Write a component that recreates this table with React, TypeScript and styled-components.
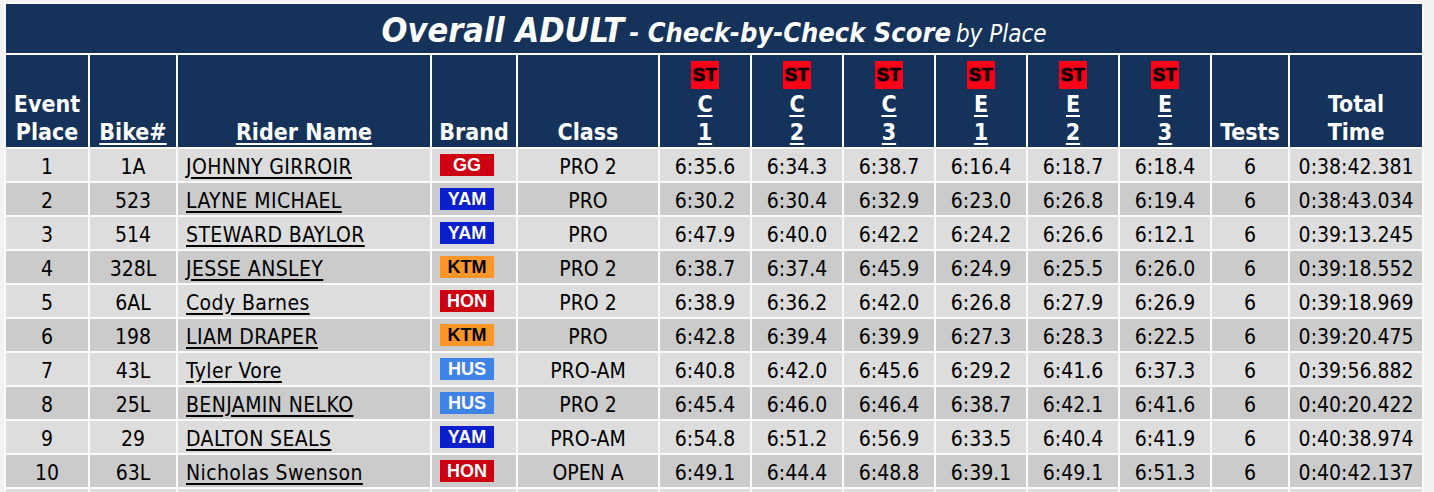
import React from 'react';
import styled, { createGlobalStyle } from 'styled-components';

const GlobalStyle = createGlobalStyle`
  * { box-sizing: border-box; }
  body {
    margin: 0;
    background: #f2f2f2;
    font-family: "DejaVu Sans Condensed", "DejaVu Sans", Verdana, sans-serif;
  }
`;

const Page = styled.div`
  padding: 2px 0 0 4px;
`;

const Table = styled.table`
  width: 1420px;
  table-layout: fixed;
  border-collapse: separate;
  border-spacing: 2px;
  background: #fafafa;
`;

const TitleCell = styled.th`
  height: 49px;
  padding: 2px 0 0;
  background: #14325a;
  color: #fff;
  text-align: center;
  font-style: italic;
  font-weight: bold;
  white-space: nowrap;
`;

const Big = styled.span`
  font-size: 34px;
`;

const Mid = styled.span`
  font-size: 27px;
`;

const Light = styled.span`
  font-size: 24px;
  font-weight: normal;
`;

const HeadCell = styled.th`
  height: 92px;
  padding: 0 0 1px;
  background: #14325a;
  color: #fff;
  font-size: 23px;
  line-height: 28px;
  font-weight: bold;
  text-align: center;
  vertical-align: bottom;
`;

const HeadLink = styled.span`
  text-decoration: underline;
  text-decoration-thickness: 2px;
  text-underline-offset: 3px;
`;

const StBadge = styled.span`
  display: inline-block;
  width: 28px;
  height: 28px;
  margin-bottom: 1px;
  background: #ff0019;
  color: #000;
  font-family: "Liberation Sans", Arial, sans-serif;
  font-size: 19px;
  line-height: 28px;
  font-weight: bold;
  vertical-align: top;
  text-shadow: 0 0 2px #000;
`;

const Row = styled.tr<{ $alt: boolean }>`
  background: ${p => (p.$alt ? '#cbcbcb' : '#dddddd')};
`;

const Cell = styled.td<{ $left?: boolean }>`
  height: 32px;
  padding: ${p => (p.$left ? '3px 0 0 8px' : '3px 0 0')};
  font-size: 21px;
  color: #000;
  text-align: ${p => (p.$left ? 'left' : 'center')};
  vertical-align: middle;
  white-space: nowrap;
`;

const RiderLink = styled.span`
  text-decoration: underline;
  text-underline-offset: 3px;
  letter-spacing: 0.4px;
`;

const brandColors: Record<string, [string, string]> = {
  GG: ['#cc0011', '#fff'],
  YAM: ['#0b1fcc', '#fff'],
  KTM: ['#fd9627', '#000'],
  HON: ['#cc0011', '#fff'],
  HUS: ['#3f83e6', '#fff'],
};

const Brand = styled.span<{ $bg: string; $fg: string }>`
  display: block;
  width: 54px;
  height: 22px;
  margin: -3px 0 0 8px;
  background: ${p => p.$bg};
  color: ${p => p.$fg};
  font-family: "Liberation Sans", Arial, sans-serif;
  font-weight: bold;
  font-size: 18px;
  line-height: 22px;
  text-align: center;
`;

const widths = [82, 86, 252, 84, 140, 90, 90, 90, 90, 90, 90, 76, 132];

type Result = [string, string, string, string, string, string[], string, string];

const results: Result[] = [
  ['1', '1A', 'JOHNNY GIRROIR', 'GG', 'PRO 2', ['6:35.6', '6:34.3', '6:38.7', '6:16.4', '6:18.7', '6:18.4'], '6', '0:38:42.381'],
  ['2', '523', 'LAYNE MICHAEL', 'YAM', 'PRO', ['6:30.2', '6:30.4', '6:32.9', '6:23.0', '6:26.8', '6:19.4'], '6', '0:38:43.034'],
  ['3', '514', 'STEWARD BAYLOR', 'YAM', 'PRO', ['6:47.9', '6:40.0', '6:42.2', '6:24.2', '6:26.6', '6:12.1'], '6', '0:39:13.245'],
  ['4', '328L', 'JESSE ANSLEY', 'KTM', 'PRO 2', ['6:38.7', '6:37.4', '6:45.9', '6:24.9', '6:25.5', '6:26.0'], '6', '0:39:18.552'],
  ['5', '6AL', 'Cody Barnes', 'HON', 'PRO 2', ['6:38.9', '6:36.2', '6:42.0', '6:26.8', '6:27.9', '6:26.9'], '6', '0:39:18.969'],
  ['6', '198', 'LIAM DRAPER', 'KTM', 'PRO', ['6:42.8', '6:39.4', '6:39.9', '6:27.3', '6:28.3', '6:22.5'], '6', '0:39:20.475'],
  ['7', '43L', 'Tyler Vore', 'HUS', 'PRO-AM', ['6:40.8', '6:42.0', '6:45.6', '6:29.2', '6:41.6', '6:37.3'], '6', '0:39:56.882'],
  ['8', '25L', 'BENJAMIN NELKO', 'HUS', 'PRO 2', ['6:45.4', '6:46.0', '6:46.4', '6:38.7', '6:42.1', '6:41.6'], '6', '0:40:20.422'],
  ['9', '29', 'DALTON SEALS', 'YAM', 'PRO-AM', ['6:54.8', '6:51.2', '6:56.9', '6:33.5', '6:40.4', '6:41.9'], '6', '0:40:38.974'],
  ['10', '63L', 'Nicholas Swenson', 'HON', 'OPEN A', ['6:49.1', '6:44.4', '6:48.8', '6:39.1', '6:49.1', '6:51.3'], '6', '0:40:42.137'],
];

const tests = [['C', '1'], ['C', '2'], ['C', '3'], ['E', '1'], ['E', '2'], ['E', '3']];

export default function App() {
  return (
    <Page>
      <GlobalStyle />
      <Table>
        <colgroup>
          {widths.map((w, i) => (
            <col key={i} style={{ width: w }} />
          ))}
        </colgroup>
        <thead>
          <tr>
            <TitleCell colSpan={13}>
              <Big>Overall ADULT</Big> <Mid>- Check-by-Check Score</Mid> <Light>by Place</Light>
            </TitleCell>
          </tr>
          <tr>
            <HeadCell>Event<br />Place</HeadCell>
            <HeadCell><HeadLink>Bike#</HeadLink></HeadCell>
            <HeadCell><HeadLink>Rider Name</HeadLink></HeadCell>
            <HeadCell>Brand</HeadCell>
            <HeadCell>Class</HeadCell>
            {tests.map(([l, n]) => (
              <HeadCell key={l + n}>
                <StBadge>ST</StBadge>
                <br />
                <HeadLink>{l}</HeadLink>
                <br />
                <HeadLink>{n}</HeadLink>
              </HeadCell>
            ))}
            <HeadCell>Tests</HeadCell>
            <HeadCell>Total<br />Time</HeadCell>
          </tr>
        </thead>
        <tbody>
          {results.map(([place, bike, rider, brand, cls, times, count, total], i) => (
            <Row key={place} $alt={i % 2 === 1}>
              <Cell>{place}</Cell>
              <Cell>{bike}</Cell>
              <Cell $left><RiderLink>{rider}</RiderLink></Cell>
              <Cell>
                <Brand $bg={brandColors[brand][0]} $fg={brandColors[brand][1]}>{brand}</Brand>
              </Cell>
              <Cell>{cls}</Cell>
              {times.map((t, j) => (
                <Cell key={j}>{t}</Cell>
              ))}
              <Cell>{count}</Cell>
              <Cell>{total}</Cell>
            </Row>
          ))}
          <Row $alt={false}>
            {widths.map((_, i) => (
              <Cell key={i} />
            ))}
          </Row>
        </tbody>
      </Table>
    </Page>
  );
}
